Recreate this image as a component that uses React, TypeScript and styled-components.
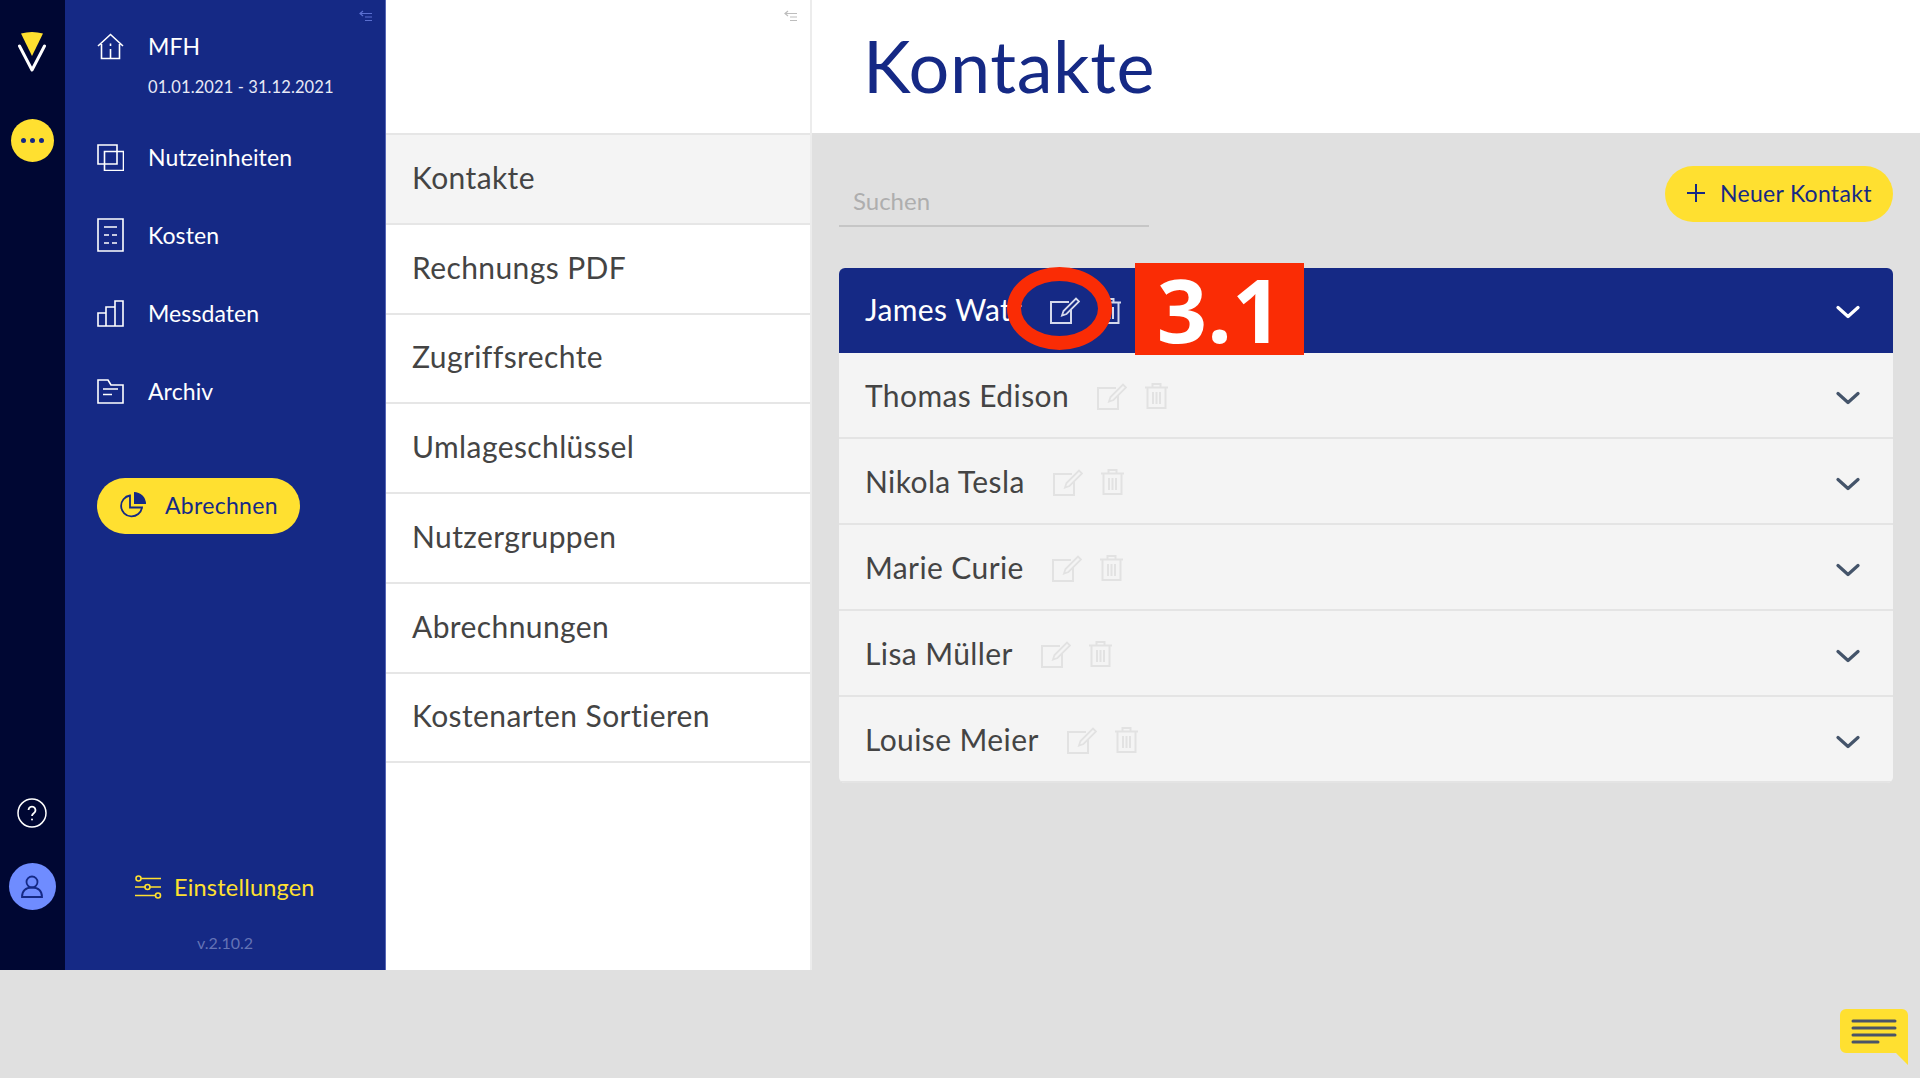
import styled, { createGlobalStyle } from "styled-components";

const navy = "#152985";
const yellow = "#ffe030";

const GlobalStyle = createGlobalStyle`
    html, body {
        margin: 0;
        padding: 0;
        height: 100%;
        background: #e0e0e0;
        font-family: "Lato", "Open Sans", sans-serif;
    }
    * {
        box-sizing: border-box;
    }
`;

const Page = styled.div`
    position: relative;
    width: 1920px;
    height: 1078px;
    overflow: hidden;
    background: #e0e0e0;
`;

const Shell = styled.div`
    display: flex;
    height: 970px;
`;

const Rail = styled.aside`
    display: flex;
    flex-direction: column;
    align-items: center;
    width: 65px;
    flex: none;
    padding: 31px 1px 0 0;
    background: #000733;
`;

const RailDots = styled.div`
    display: flex;
    align-items: center;
    justify-content: center;
    gap: 4px;
    width: 43px;
    height: 43px;
    margin-top: 46px;
    border-radius: 50%;
    background: ${yellow};

    > i {
        width: 5px;
        height: 5px;
        border-radius: 50%;
        background: ${navy};
    }
`;

const RailHelp = styled.div`
    margin-top: auto;
    height: 30px;
    color: white;
`;

const Avatar = styled.div`
    display: flex;
    align-items: center;
    justify-content: center;
    width: 47px;
    height: 47px;
    margin: 35px 0 60px;
    border-radius: 50%;
    background: #6f8cff;
`;

const Sidebar = styled.nav`
    position: relative;
    display: flex;
    flex-direction: column;
    width: 321px;
    flex: none;
    padding: 0 0 0 32px;
    background: ${navy};
    border-right: 1px solid #5566b5;
    color: white;
`;

const Collapse = styled.div<{ $color: string }>`
    position: absolute;
    top: 6px;
    right: 12px;
    color: ${(p) => p.$color};
`;

const NavItem = styled.div<{ $top: number }>`
    display: flex;
    align-items: center;
    gap: 24px;
    height: 36px;
    margin-top: ${(p) => p.$top}px;
    font-size: 23px;
    letter-spacing: 0.1px;
    white-space: nowrap;
`;

const NavIcon = styled.span`
    display: flex;
    align-items: center;
    justify-content: center;
    width: 27px;
    flex: none;
`;

const DateRange = styled.div`
    height: 20px;
    margin: 13px 0 0 51px;
    font-size: 16.5px;
    line-height: 20px;
    letter-spacing: 0.1px;
    color: #e8eaf6;
`;

const PillButton = styled.div`
    display: inline-flex;
    align-items: center;
    height: 56px;
    border-radius: 28px;
    background: ${yellow};
    color: ${navy};
    font-size: 23px;
    letter-spacing: 0.3px;
    white-space: nowrap;
    padding-bottom: 2px;
`;

const BillButton = styled(PillButton)`
    width: 203px;
    margin-top: 69px;
    padding-left: 22px;
    gap: 18px;
`;

const Settings = styled.div`
    display: flex;
    align-items: center;
    gap: 12px;
    margin: auto 0 0 38px;
    color: ${yellow};
    font-size: 23.5px;
    letter-spacing: 0.2px;
`;

const Version = styled.div`
    margin: 32px 0 17px -32px;
    text-align: center;
    color: #6473b5;
    font-size: 16px;
    line-height: 20px;
`;

const SubMenu = styled.section`
    position: relative;
    width: 426px;
    flex: none;
    padding-top: 133px;
    background: white;
    border-right: 2px solid #ececec;
`;

const SubItem = styled.div<{ $active?: boolean }>`
    display: flex;
    align-items: center;
    height: 89.8px;
    padding: 0 0 4px 26px;
    border-top: 2px solid #e6e6e6;
    background: ${(p) => (p.$active ? "#f4f4f4" : "white")};
    color: #444444;
    font-size: 30px;
    letter-spacing: 0.4px;

    &:last-child {
        height: 91.2px;
        border-bottom: 2px solid #e6e6e6;
    }
`;

const Main = styled.main`
    flex: 1;
    display: flex;
    flex-direction: column;
    min-width: 0;
`;

const Header = styled.header`
    display: flex;
    align-items: center;
    height: 133px;
    padding: 0 0 3px 51px;
    background: white;
`;

const Title = styled.h1`
    margin: 0;
    color: ${navy};
    font-size: 72px;
    font-weight: 400;
    letter-spacing: 0.6px;
`;

const Content = styled.div`
    padding: 33px 27px 0 27px;
`;

const Toolbar = styled.div`
    display: flex;
    justify-content: space-between;
    align-items: flex-start;
    height: 102px;
`;

const Search = styled.div`
    width: 310px;
    height: 62px;
    margin-top: -1px;
    padding: 21px 0 0 14px;
    border-bottom: 2px solid #c6c6c6;
    color: #aeaeae;
    font-size: 24px;
    line-height: 30px;
`;

const NewButton = styled(PillButton)`
    width: 228px;
    padding-left: 22px;
    gap: 15px;
`;

const List = styled.div`
    border-radius: 6px;
    overflow: hidden;
`;

const Row = styled.div<{ $active?: boolean }>`
    display: flex;
    align-items: center;
    height: ${(p) => (p.$active ? 85 : 86)}px;
    padding: 0 33px 0 26px;
    background: ${(p) => (p.$active ? navy : "#f4f4f4")};
    border-bottom: ${(p) => (p.$active ? "none" : "2px solid #e4e4e4")};
    color: ${(p) => (p.$active ? "white" : "#444444")};
    font-size: 30px;
    letter-spacing: 0.4px;
`;

const RowName = styled.span<{ $active?: boolean }>`
    white-space: nowrap;
    margin-bottom: ${(p) => (p.$active ? 4 : 0)}px;
`;

const RowIcons = styled.span<{ $active?: boolean }>`
    display: flex;
    align-items: center;
    gap: 18px;
    margin: ${(p) => (p.$active ? "0" : "2px")} 0 0 28px;
    color: ${(p) => (p.$active ? "#d5d9ec" : "#e2e2e2")};
`;

const RowChevron = styled.span<{ $active?: boolean }>`
    display: flex;
    margin: ${(p) => (p.$active ? "2px" : "6px")} 0 0 auto;
    color: ${(p) => (p.$active ? "white" : "#44546a")};
`;

const Marker = styled.div`
    position: absolute;
    left: 1007px;
    top: 267px;
    width: 105px;
    height: 83px;
    border: 14px solid #fa2c05;
    border-radius: 50%;
`;

const Badge = styled.div`
    position: absolute;
    left: 1135px;
    top: 263px;
    display: flex;
    align-items: center;
    justify-content: center;
    width: 169px;
    height: 92px;
    background: #fa2c05;
    color: white;
    font-family: "Open Sans", sans-serif;
    font-size: 88px;
    font-weight: 700;
    letter-spacing: 0;
`;

const ChatBubble = styled.div`
    position: absolute;
    left: 1840px;
    top: 1009px;
`;

const CollapseIcon = () => (
    <svg width="14" height="12" viewBox="0 0 14 12" fill="none" stroke="currentColor" strokeWidth="1.2">
        <path d="M4 1 1 3.500 4 6M1 3.500h12M6 7h7M6 10.500h7" />
    </svg>
);

const Logo = () => (
    <svg width="28" height="42" viewBox="0 0 28 42">
        <path d="M1.500 15 14 39 26.500 15" fill="none" stroke="white" strokeWidth="3" strokeLinecap="round" strokeLinejoin="round" />
        <path d="M3 2.500Q14-.5 25 2.500L14 25Z" fill={yellow} />
    </svg>
);

const HouseIcon = () => (
    <svg width="27" height="27" viewBox="0 0 27 27" fill="none" stroke="currentColor" strokeWidth="1.6">
        <path d="M1 13 13.500 1.500 26 13M4.500 11v14.500h18V11M13.500 16v9M13.500 10.500v2.500" />
    </svg>
);

const UnitsIcon = () => (
    <svg width="27" height="27" viewBox="0 0 27 27" fill="none" stroke="currentColor" strokeWidth="1.6">
        <path d="M1 1h19v19H1zM7.500 7.500h19v19h-19z" />
    </svg>
);

const CostIcon = () => (
    <svg width="27" height="34" viewBox="0 0 27 34" fill="none" stroke="currentColor" strokeWidth="1.6">
        <path d="M1 1h25v32H1zM7 9h13M7 17h5M15 17h5M7 25h5M15 25h5" />
    </svg>
);

const ChartIcon = () => (
    <svg width="27" height="27" viewBox="0 0 27 27" fill="none" stroke="currentColor" strokeWidth="1.6">
        <path d="M1 13h8v13H1zM9 7h9v19H9zM18 1h8v25h-8z" />
    </svg>
);

const FolderIcon = () => (
    <svg width="27" height="25" viewBox="0 0 27 25" fill="none" stroke="currentColor" strokeWidth="1.6">
        <path d="M1 24V1h10l3 5h12v18zM6 10h15M6 15.500h9" />
    </svg>
);

const PieIcon = () => (
    <svg width="28" height="28" viewBox="0 0 28 28" fill="none" stroke="currentColor" strokeWidth="1.8">
        <path d="M11 4.500a10.500 10.500 0 1 0 12 12H11z" />
        <path d="M15 1a12 12 0 0 1 12 12H15z" fill="currentColor" stroke="none" />
    </svg>
);

const HelpIcon = () => (
    <svg width="30" height="30" viewBox="0 0 30 30" fill="none" stroke="currentColor" strokeWidth="1.5">
        <circle cx="15" cy="15" r="14" />
        <path d="M11.500 12a3.500 3.500 0 1 1 5.500 3c-1.300.9-2 1.500-2 3" strokeWidth="1.800" />
        <circle cx="15" cy="21.500" r="1" fill="currentColor" stroke="none" />
    </svg>
);

const UserIcon = () => (
    <svg width="22" height="24" viewBox="0 0 22 24" fill="none" stroke={navy} strokeWidth="1.800">
        <circle cx="11" cy="7" r="5.500" />
        <path d="M1 22c0-6 3.500-9.500 10-9.500S21 16 21 22z" />
    </svg>
);

const SlidersIcon = () => (
    <svg width="27" height="24" viewBox="0 0 27 24" fill="none" stroke="currentColor" strokeWidth="1.600">
        <circle cx="3.500" cy="3.500" r="2.500" />
        <path d="M6 3.500h20M0 12h10M15 12h11M0 20.500h20" />
        <circle cx="12.500" cy="12" r="2.500" />
        <circle cx="23" cy="20.500" r="2.500" />
    </svg>
);

const EditIcon = () => (
    <svg width="30" height="27" viewBox="0 0 30 27" fill="none" stroke="currentColor" strokeWidth="1.800">
        <path d="M19 5H1v21h20V12" strokeWidth="2" />
        <path d="M12 18.500 13.500 14 26 1.500l3 3L16.500 17z" />
    </svg>
);

const TrashIcon = () => (
    <svg width="23" height="26" viewBox="0 0 23 26" fill="none" stroke="currentColor" strokeWidth="2">
        <path d="M0 4.500h23M7.500 4.500V1h8v3.500M2.500 4.500V25h18V4.500M8 9v12M11.500 9v12M15 9v12" />
    </svg>
);

const ChevronIcon = () => (
    <svg width="24" height="14" viewBox="0 0 24 14" fill="none" stroke="currentColor" strokeWidth="3.200" strokeLinecap="round" strokeLinejoin="round">
        <path d="M2 2.500 12 11.500 22 2.500" />
    </svg>
);

const PlusIcon = () => (
    <svg width="18" height="18" viewBox="0 0 18 18" fill="none" stroke="currentColor" strokeWidth="2">
        <path d="M9 0v18M0 9h18" />
    </svg>
);

const BubbleIcon = () => (
    <svg width="68" height="58" viewBox="0 0 68 58">
        <path d="M6 0h56a6 6 0 0 1 6 6v50L56 44H6a6 6 0 0 1-6-6V6a6 6 0 0 1 6-6z" fill={yellow} />
        <path d="M13 12h42M13 19h42M13 26h42M13 33h25" stroke="#4a5468" strokeWidth="3" strokeLinecap="round" />
    </svg>
);

const menuItems = ["Kontakte", "Rechnungs PDF", "Zugriffsrechte", "Umlageschlüssel", "Nutzergruppen", "Abrechnungen", "Kostenarten Sortieren"];
const contacts = ["James Watt", "Thomas Edison", "Nikola Tesla", "Marie Curie", "Lisa Müller", "Louise Meier"];

const App = () => {
    return (
        <Page>
            <GlobalStyle />
            <Shell>
                <Rail>
                    <Logo />
                    <RailDots><i /><i /><i /></RailDots>
                    <RailHelp><HelpIcon /></RailHelp>
                    <Avatar><UserIcon /></Avatar>
                </Rail>
                <Sidebar>
                    <Collapse $color="#5a6fd0"><CollapseIcon /></Collapse>
                    <NavItem $top={28}><NavIcon><HouseIcon /></NavIcon>MFH</NavItem>
                    <DateRange>01.01.2021 - 31.12.2021</DateRange>
                    <NavItem $top={42}><NavIcon><UnitsIcon /></NavIcon>Nutzeinheiten</NavItem>
                    <NavItem $top={42}><NavIcon><CostIcon /></NavIcon>Kosten</NavItem>
                    <NavItem $top={42}><NavIcon><ChartIcon /></NavIcon>Messdaten</NavItem>
                    <NavItem $top={42}><NavIcon><FolderIcon /></NavIcon>Archiv</NavItem>
                    <BillButton><PieIcon />Abrechnen</BillButton>
                    <Settings><SlidersIcon />Einstellungen</Settings>
                    <Version>v.2.10.2</Version>
                </Sidebar>
                <SubMenu>
                    <Collapse $color="#bdbdbd"><CollapseIcon /></Collapse>
                    {menuItems.map((item, index) => (
                        <SubItem key={item} $active={index === 0}>{item}</SubItem>
                    ))}
                </SubMenu>
                <Main>
                    <Header><Title>Kontakte</Title></Header>
                    <Content>
                        <Toolbar>
                            <Search>Suchen</Search>
                            <NewButton><PlusIcon />Neuer Kontakt</NewButton>
                        </Toolbar>
                        <List>
                            {contacts.map((name, index) => (
                                <Row key={name} $active={index === 0}>
                                    <RowName $active={index === 0}>{name}</RowName>
                                    <RowIcons $active={index === 0}>
                                        <EditIcon />
                                        <TrashIcon />
                                    </RowIcons>
                                    <RowChevron $active={index === 0}><ChevronIcon /></RowChevron>
                                </Row>
                            ))}
                        </List>
                    </Content>
                </Main>
            </Shell>
            <Marker />
            <Badge>3.1</Badge>
            <ChatBubble><BubbleIcon /></ChatBubble>
        </Page>
    );
};

export default App;
